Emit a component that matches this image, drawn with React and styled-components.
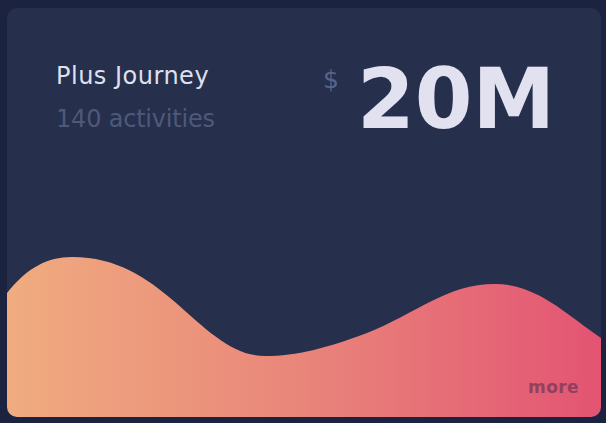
import React from 'react'
import styled, { createGlobalStyle } from 'styled-components'

const GlobalStyle = createGlobalStyle`
  html, body {
    margin: 0;
    padding: 0;
    background: #1c2340;
  }
  body {
    font-family: "DejaVu Sans", "Open Sans", sans-serif;
  }
`

const Page = styled.div`
  width: 606px;
  height: 423px;
  padding: 8px 5px 6px 7px;
  box-sizing: border-box;
  display: flex;
`

const Card = styled.div`
  position: relative;
  flex: 1;
  display: flex;
  flex-direction: column;
  background: #262f4c;
  border-radius: 10px;
  overflow: hidden;
`

const Header = styled.div`
  position: relative;
  display: flex;
  justify-content: space-between;
  align-items: flex-start;
  padding: 53px 46px 0 49px;
`

const Titles = styled.div`
  display: flex;
  flex-direction: column;
  gap: 13px;
`

const Title = styled.div`
  font-size: 24px;
  line-height: 30px;
  font-weight: 400;
  color: ${props => props.muted ? '#4e5979' : '#dfe0ef'};
  letter-spacing: ${props => props.muted ? '-0.2px' : '0.5px'};
`

const Amount = styled.div`
  display: flex;
  align-items: flex-start;
  gap: 18px;
  margin-top: 3px;
`

const Currency = styled.span`
  font-size: 25px;
  line-height: 1;
  margin-top: 3px;
  color: #5a6386;
`

const Value = styled.span`
  font-size: 83px;
  line-height: 72px;
  font-weight: 700;
  color: #e1e1f0;
`

const Wave = styled.svg`
  position: absolute;
  inset: 0;
  width: 100%;
  height: 100%;
`

const Footer = styled.div`
  position: relative;
  margin-top: auto;
  display: flex;
  justify-content: flex-end;
  padding: 0 22px 20px 0;
`

const More = styled.span`
  font-size: 17px;
  font-weight: 700;
  color: #93405f;
  letter-spacing: 0.4px;
`

export default function App() {
  return (
    <>
      <GlobalStyle />
      <Page>
        <Card>
          <Wave viewBox="0 0 594 409" preserveAspectRatio="none">
            <defs>
              <linearGradient id="waveFill" x1="0" y1="0" x2="1" y2="0">
                <stop offset="0" stopColor="#f0ac7f" />
                <stop offset="0.5" stopColor="#e9857a" />
                <stop offset="1" stopColor="#e35473" />
              </linearGradient>
            </defs>
            <path
              fill="url(#waveFill)"
              d="M0,285 C20,260 40,249 65,249 C110,249 140,270 168,294 C200,322 225,348 258,348 C290,348 320,340 360,325 C410,305 440,276 488,276 C530,276 560,307 594,330 L594,409 L0,409 Z"
            />
          </Wave>
          <Header>
            <Titles>
              <Title>Plus Journey</Title>
              <Title muted>140 activities</Title>
            </Titles>
            <Amount>
              <Currency>$</Currency>
              <Value>20M</Value>
            </Amount>
          </Header>
          <Footer>
            <More>more</More>
          </Footer>
        </Card>
      </Page>
    </>
  )
}
